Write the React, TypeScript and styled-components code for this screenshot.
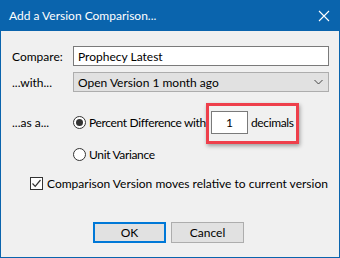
import React from "react";
import styled, { createGlobalStyle } from "styled-components";

const GlobalStyle = createGlobalStyle`
	html, body {
		margin: 0;
		padding: 0;
		background: #ffffff;
	}
	body {
		font-family: Lato, "Liberation Sans", sans-serif;
		font-size: 12px;
		color: #000;
	}
`;

const WindowSC = styled.div`
	width: 340px;
	height: 258px;
	box-sizing: border-box;
	border: 1px solid #0a64ad;
	border-top: none;
	background: #f0f0f0;
	display: flex;
	flex-direction: column;
`;

const TitleBarSC = styled.div`
	height: 31px;
	margin: 0 -1px;
	background: #0a64ad;
	color: #fff;
	display: flex;
	align-items: center;
	justify-content: space-between;
	padding: 0 10px 0 9px;
	font-size: 12px;
`;

const CloseSC = styled.svg`
	width: 12px;
	height: 12px;
`;

const BodySC = styled.div`
	flex: 1;
	display: flex;
	flex-direction: column;
	padding: 15px 10px 0 11px;
`;

const RowSC = styled.div<{ $mt?: number; $h?: number }>`
	display: flex;
	align-items: center;
	margin-top: ${(p) => p.$mt ?? 0}px;
	height: ${(p) => p.$h ?? 20}px;
	white-space: nowrap;
`;

const LabelSC = styled.span`
	width: 61px;
	flex-shrink: 0;
`;

const TextInputSC = styled.div`
	flex: 1;
	height: 20px;
	box-sizing: border-box;
	border: 1px solid #7a7a7a;
	background: #fff;
	display: flex;
	align-items: center;
	padding-left: 4px;
`;

const SelectSC = styled.div`
	flex: 1;
	height: 20px;
	box-sizing: border-box;
	border: 1px solid #adadad;
	background: #e1e1e1;
	display: flex;
	align-items: center;
	justify-content: space-between;
	padding: 0 5px 0 4px;
`;

const RadioSC = styled.span<{ $checked?: boolean }>`
	width: 13px;
	height: 13px;
	box-sizing: border-box;
	border: 1px solid #333;
	border-radius: 50%;
	background: #fff;
	display: inline-flex;
	align-items: center;
	justify-content: center;
	margin-right: 3px;
	flex-shrink: 0;
	&::after {
		content: "";
		width: 7px;
		height: 7px;
		border-radius: 50%;
		background: ${(p) => (p.$checked ? "#333" : "transparent")};
	}
`;

const TightTextSC = styled.span`
	letter-spacing: -0.35px;
`;

const HighlightSC = styled.span`
	position: relative;
	display: inline-flex;
	align-items: center;
	margin-left: 5px;
	&::after {
		content: "";
		position: absolute;
		left: -5px;
		top: -8px;
		right: -5px;
		bottom: -10px;
		border: 3px solid #ee3f4b;
		box-shadow: 1px 2px 4px rgba(0, 0, 0, 0.35);
	}
`;

const NumberBoxSC = styled.div`
	width: 37px;
	height: 23px;
	box-sizing: border-box;
	border: 1px solid #7a7a7a;
	background: #fff;
	display: flex;
	align-items: center;
	justify-content: center;
	margin-right: 3px;
`;

const CheckboxSC = styled.span`
	width: 13px;
	height: 13px;
	box-sizing: border-box;
	border: 1px solid #333;
	background: #fff;
	display: inline-flex;
	align-items: center;
	justify-content: center;
	margin: 0 4px 0 18px;
`;

const ButtonsSC = styled.div`
	display: flex;
	justify-content: center;
	gap: 5px;
	margin-top: 30px;
	padding-right: 4px;
`;

const ButtonSC = styled.div<{ $primary?: boolean }>`
	width: 73px;
	height: 21px;
	box-sizing: border-box;
	border: ${(p) => (p.$primary ? "2px solid #0078d7" : "1px solid #adadad")};
	background: #e1e1e1;
	display: flex;
	align-items: center;
	justify-content: center;
`;

const App = () => {
	return (
		<>
			<GlobalStyle />
			<WindowSC>
				<TitleBarSC>
					<span>Add a Version Comparison...</span>
					<CloseSC viewBox="0 0 12 12">
						<path d="M1 1 L11 11 M11 1 L1 11" stroke="#fff" strokeWidth="1.1" fill="none" />
					</CloseSC>
				</TitleBarSC>
				<BodySC>
					<RowSC>
						<LabelSC>Compare:</LabelSC>
						<TextInputSC>Prophecy Latest</TextInputSC>
					</RowSC>
					<RowSC $mt={6}>
						<LabelSC>...with...</LabelSC>
						<SelectSC>
							<span>Open Version 1 month ago</span>
							<svg width="9" height="6" viewBox="0 0 9 6">
								<path d="M0.5 1 L4.5 5 L8.5 1" stroke="#444" strokeWidth="1" fill="none" />
							</svg>
						</SelectSC>
					</RowSC>
					<RowSC $mt={19} $h={23}>
						<LabelSC>...as a...</LabelSC>
						<RadioSC $checked />
						<TightTextSC>Percent Difference with</TightTextSC>
						<HighlightSC>
							<NumberBoxSC>1</NumberBoxSC>
							<TightTextSC>decimals</TightTextSC>
						</HighlightSC>
					</RowSC>
					<RowSC $mt={12} $h={17}>
						<LabelSC />
						<RadioSC />
						<TightTextSC>Unit Variance</TightTextSC>
					</RowSC>
					<RowSC $mt={12} $h={17}>
						<CheckboxSC>
							<svg width="11" height="11" viewBox="0 0 11 11">
								<path d="M1.5 5.5 L4.2 8.3 L9.5 2" stroke="#333" strokeWidth="1.2" fill="none" />
							</svg>
						</CheckboxSC>
						<span>Comparison Version moves relative to current version</span>
					</RowSC>
					<ButtonsSC>
						<ButtonSC $primary>OK</ButtonSC>
						<ButtonSC>Cancel</ButtonSC>
					</ButtonsSC>
				</BodySC>
			</WindowSC>
		</>
	);
};

export default App;
